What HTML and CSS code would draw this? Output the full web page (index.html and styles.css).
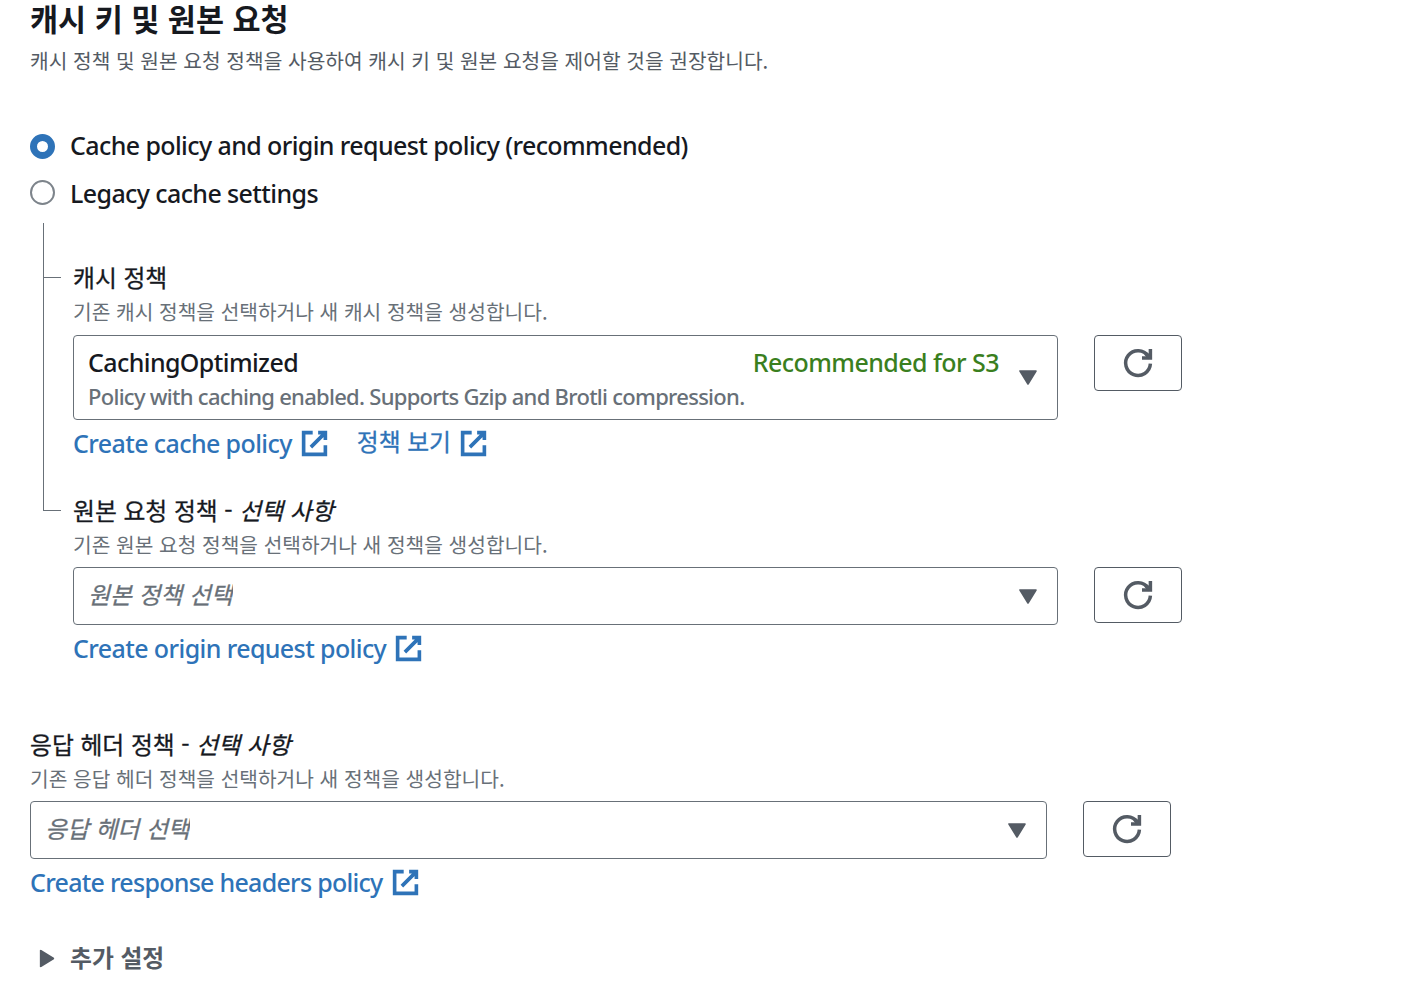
FILE: index.html
```html
<!DOCTYPE html>
<html lang="ko">
<head>
    <meta charset="UTF-8">
    <meta name="viewport" content="width=device-width, initial-scale=1.0">
    <title>캐시 키 및 원본 요청</title>
    <link rel="stylesheet" href="styles.css">
</head>
<body>

    <!-- Shared icons -->
    <svg class="sprite" width="0" height="0">
        <symbol id="external" viewBox="0 0 16 16">
            <path d="M10 2h4v4M6 10l8-8M14 9v5H2V2h5" fill="none" stroke="currentColor" stroke-width="2"/>
        </symbol>
        <symbol id="refresh" viewBox="0 0 32 32">
            <path d="M28.4 16.7A12.4 12.4 0 1 1 26.3 9.1M20 11h8.4V2" fill="none" stroke="currentColor" stroke-width="3.5"/>
            <path d="M23.5 6.5L28 11" fill="none" stroke="currentColor" stroke-width="3.5"/>
        </symbol>
        <symbol id="caret" viewBox="0 0 18 15">
            <path d="M1 1h16L9 14z" fill="currentColor" stroke="currentColor" stroke-width="1.6" stroke-linejoin="round"/>
        </symbol>
    </svg>

    <div class="container">
        <h2>캐시 키 및 원본 요청</h2>
        <p class="intro">캐시 정책 및 원본 요청 정책을 사용하여 캐시 키 및 원본 요청을 제어할 것을 권장합니다.</p>

        <div class="radios">
            <label class="radio"><input type="radio" name="policyType" checked><span class="latin">Cache policy and origin request policy (recommended)</span></label>
            <label class="radio"><input type="radio" name="policyType"><span class="latin legacy">Legacy cache settings</span></label>
        </div>

        <div class="tree">
            <div class="branch">
                <div class="line"><div class="tick"></div></div>
                <div class="field first">
                    <div class="field-label">캐시 정책</div>
                    <div class="hint">기존 캐시 정책을 선택하거나 새 캐시 정책을 생성합니다.</div>
                    <div class="row">
                        <div class="select tall">
                            <div class="option">
                                <div class="option-top latin">
                                    <span class="option-name">CachingOptimized</span>
                                    <span class="tag">Recommended for S3</span>
                                </div>
                                <div class="option-desc latin">Policy with caching enabled. Supports Gzip and Brotli compression.</div>
                            </div>
                            <svg class="caret"><use href="#caret"/></svg>
                        </div>
                        <button class="refresh" aria-label="Refresh"><svg><use href="#refresh"/></svg></button>
                    </div>
                    <div class="links">
                        <a class="link"><span class="latin">Create cache policy</span><svg><use href="#external"/></svg></a>
                        <a class="link"><span class="korean">정책 보기</span><svg><use href="#external"/></svg></a>
                    </div>
                </div>
            </div>
            <div class="branch">
                <div class="line last"></div>
                <div class="field second">
                    <div class="field-label">원본 요청 정책 - <em>선택 사항</em></div>
                    <div class="hint">기존 원본 요청 정책을 선택하거나 새 정책을 생성합니다.</div>
                    <div class="row">
                        <div class="select">
                            <span class="placeholder">원본 정책 선택</span>
                            <svg class="caret"><use href="#caret"/></svg>
                        </div>
                        <button class="refresh" aria-label="Refresh"><svg><use href="#refresh"/></svg></button>
                    </div>
                    <div class="links">
                        <a class="link"><span class="latin">Create origin request policy</span><svg><use href="#external"/></svg></a>
                    </div>
                </div>
            </div>
        </div>

        <div class="field response">
            <div class="field-label">응답 헤더 정책 - <em>선택 사항</em></div>
            <div class="hint">기존 응답 헤더 정책을 선택하거나 새 정책을 생성합니다.</div>
            <div class="row">
                <div class="select">
                    <span class="placeholder">응답 헤더 선택</span>
                    <svg class="caret"><use href="#caret"/></svg>
                </div>
                <button class="refresh" aria-label="Refresh"><svg><use href="#refresh"/></svg></button>
            </div>
            <div class="links">
                <a class="link"><span class="latin">Create response headers policy</span><svg><use href="#external"/></svg></a>
            </div>
        </div>

        <div class="more">
            <svg><use href="#caret"/></svg>
            <span>추가 설정</span>
        </div>
    </div>

</body>
</html>
```
FILE: styles.css
```css
* {
    box-sizing: border-box;
}
body {
    margin: 0;
    background-color: #fff;
    color: #16191f;
    font-family: "Noto Sans CJK KR", sans-serif;
    font-size: 23.8px;
}
.sprite {
    display: block;
}
.container {
    padding-left: 30px;
}
.latin {
    font-family: "Noto Sans", sans-serif;
    font-size: 25px;
    font-weight: 500;
    letter-spacing: -0.6px;
    white-space: nowrap;
}
h2 {
    margin: 0;
    height: 40px;
    line-height: 36px;
    font-size: 30.5px;
    font-weight: 700;
}
.intro {
    margin: 5px 0 0;
    height: 31px;
    line-height: 30px;
    font-size: 20.3px;
    color: #545b64;
}
.radios {
    margin-top: 47px;
}
.radio {
    display: flex;
    align-items: center;
    height: 46px;
}
.radio span {
    margin-top: -2px;
}
.radio .legacy {
    margin-top: 1px;
}
.radio input {
    appearance: none;
    width: 25px;
    height: 25px;
    margin: 0 15px 0 0;
    border: 2px solid #7d848b;
    border-radius: 50%;
}
.radio input:checked {
    border: 7.5px solid #2e73b8;
}
.tree {
    margin: 8px 0 0 13px;
}
.branch {
    display: flex;
}
.line {
    width: 18px;
    margin-right: 12px;
    border-left: 1px solid #687078;
}
.tick {
    height: 55px;
    border-bottom: 1px solid #687078;
}
.line.last {
    height: 30px;
    border-bottom: 1px solid #687078;
}
.first {
    padding: 37px 0 20px;
}
.first .row {
    margin-top: 7px;
}
.second {
    padding-top: 12px;
}
.field-label {
    height: 36px;
    line-height: 34px;
    -webkit-text-stroke: 0.3px;
}
.hint {
    height: 32px;
    margin-bottom: 6px;
    line-height: 30px;
    font-size: 20.3px;
    color: #687078;
}
.row {
    display: flex;
    align-items: flex-start;
    gap: 36px;
}
.select {
    display: flex;
    align-items: center;
    justify-content: space-between;
    width: 985px;
    height: 58px;
    padding: 0 20px 0 14px;
    border: 1px solid #687078;
    border-radius: 4px;
}
.select.tall {
    height: 85px;
}
.response .select {
    width: 1017px;
}
.caret {
    width: 18px;
    height: 15px;
    color: #545b64;
}
.option {
    width: 911px;
    padding-top: 3px;
}
.option-top {
    display: flex;
    justify-content: space-between;
    height: 34px;
    line-height: 34px;
}
.tag {
    color: #3a7f1e;
    letter-spacing: -0.55px;
}
.option-desc {
    height: 34px;
    line-height: 34px;
    font-size: 22px;
    letter-spacing: -0.72px;
    color: #687078;
}
.placeholder {
    margin-top: -5px;
    overflow: hidden;
    font-style: italic;
    color: #687078;
    -webkit-text-stroke: 0.3px;
}
.refresh {
    display: flex;
    align-items: center;
    justify-content: center;
    width: 88px;
    height: 56px;
    padding: 0;
    border: 1px solid #545b64;
    border-radius: 4px;
    background-color: #fff;
    color: #545b64;
}
.refresh svg {
    width: 32px;
    height: 32px;
}
.links {
    display: flex;
    gap: 28px;
    height: 36px;
    margin-top: 5px;
}
.link {
    display: flex;
    align-items: center;
    gap: 8px;
    color: #2e73b8;
}
.link span {
    margin-top: 0;
}
.first .link .latin {
    margin-top: -1px;
}
.link .korean {
    margin-top: -5px;
    -webkit-text-stroke: 0.3px;
}
.link svg {
    width: 29px;
    height: 29px;
}
.response {
    margin-top: 61px;
}
.response .latin {
    letter-spacing: -0.72px;
}
.more {
    display: flex;
    align-items: center;
    gap: 14px;
    height: 36px;
    margin-top: 40px;
    padding-left: 8px;
    font-weight: 700;
    color: #545b64;
}
.more span {
    margin-top: -4px;
}
.more svg {
    width: 18px;
    height: 15px;
    transform: rotate(-90deg);
}
```
